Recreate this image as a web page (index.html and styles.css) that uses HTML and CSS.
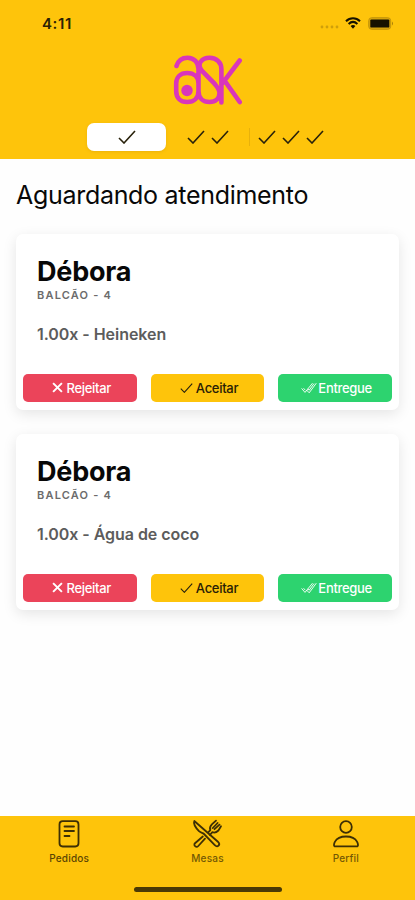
FILE: index.html
```html
<!DOCTYPE html>
<html lang="pt-BR">
<head>
<meta charset="utf-8">
<title>Pedidos</title>
<link rel="stylesheet" href="styles.css">
</head>
<body>
<svg class="defs" width="0" height="0" aria-hidden="true">
  <symbol id="tick" viewBox="0 0 18 14"><path d="M1 8l5 5L17 1"/></symbol>
</svg>
<header class="header">
  <div class="status">
    <span class="time">4:11</span>
    <div class="indicators">
      <svg class="signal" viewBox="0 0 19 4"><circle cx="2" cy="2" r="1.4"/><circle cx="7" cy="2" r="1.4"/><circle cx="12" cy="2" r="1.4"/><circle cx="17" cy="2" r="1.4"/></svg>
      <svg class="wifi" viewBox="0 0 16 12"><path d="M1 4.3C5 .3 11 .3 15 4.3M3.6 7c2.7-2.6 6.1-2.6 8.8 0" fill="none" stroke="#171200" stroke-width="2"/><path d="M5.6 9c1.4-1.3 3.4-1.3 4.8 0L8 11.8z"/></svg>
      <svg class="battery" viewBox="0 0 26 13"><rect x=".7" y=".7" width="22" height="11.6" rx="3" fill="#d9a60c" stroke="#c2940a"/><rect x="2.3" y="2.4" width="19" height="8.2" rx="1.2"/><path d="M24 4.5q2 2 0 4z" fill="#a98009"/></svg>
    </div>
  </div>
  <svg class="logo" viewBox="0 0 70 50" role="img" aria-label="ask">
    <path d="M3.5 11C5 6 9 2.7 14.5 2.7C21 2.7 25.5 7.5 25.5 14V36C25.5 43 21 47 14.2 47S3.2 43 3.2 36V28.5C3.2 22 7.5 18 14.2 18S25.5 22 25.5 28.5V36C25.5 43 30 47 36.5 47S46.5 43 46.5 38C46.5 34 44 32 41 28L29 16C23 9 29 2.7 36.5 2.7S48.4 8 48.4 14V47.5M66.7 5.5L51.5 25.5L66.7 47M48.4 29.5L51.5 25.5"/>
    <circle cx="14" cy="35.5" r="5.7"/>
  </svg>
  <nav class="segments">
    <div class="segment selected"><svg class="tick"><use href="#tick"/></svg></div>
    <div class="segment"><svg class="tick"><use href="#tick"/></svg><svg class="tick"><use href="#tick"/></svg></div>
    <div class="segment divided"><svg class="tick"><use href="#tick"/></svg><svg class="tick"><use href="#tick"/></svg><svg class="tick"><use href="#tick"/></svg></div>
  </nav>
</header>
<main class="content">
  <h1>Aguardando atendimento</h1>
  <article class="card">
    <h2>Débora</h2>
    <p class="place">BALCÃO - 4</p>
    <p class="item">1.00x - Heineken</p>
    <div class="actions">
      <button class="reject"><svg class="cross" viewBox="0 0 10 10"><path d="M1 1l8 8M9 1L1 9"/></svg><span>Rejeitar</span></button>
      <button class="accept"><svg class="small-tick" viewBox="0 0 18 14"><path d="M1 8l5 5L17 1"/></svg><span>Aceitar</span></button>
      <button class="deliver"><svg class="double" viewBox="0 0 16 12"><path d="M.6 6.4l3.4 4 7.5-9.2M5.5 8l2.7 2.8L15.3 1.2M2.5 6.2l1.8 2M7 6.8l1.2 1.4L13 1.6"/></svg><span>Entregue</span></button>
    </div>
  </article>
  <article class="card">
    <h2>Débora</h2>
    <p class="place">BALCÃO - 4</p>
    <p class="item">1.00x - Água de coco</p>
    <div class="actions">
      <button class="reject"><svg class="cross" viewBox="0 0 10 10"><path d="M1 1l8 8M9 1L1 9"/></svg><span>Rejeitar</span></button>
      <button class="accept"><svg class="small-tick" viewBox="0 0 18 14"><path d="M1 8l5 5L17 1"/></svg><span>Aceitar</span></button>
      <button class="deliver"><svg class="double" viewBox="0 0 16 12"><path d="M.6 6.4l3.4 4 7.5-9.2M5.5 8l2.7 2.8L15.3 1.2M2.5 6.2l1.8 2M7 6.8l1.2 1.4L13 1.6"/></svg><span>Entregue</span></button>
    </div>
  </article>
</main>
<footer class="footer">
  <nav class="tabs">
    <a class="tab active"><svg viewBox="0 0 28 28"><rect x="4.5" y="1.2" width="19" height="25.3" rx="3.2"/><path d="M9.5 6.5h9.5M9.5 11h9.5M9.5 16h5"/></svg><span>Pedidos</span></a>
    <a class="tab"><svg viewBox="0 0 28 28"><path d="M1.3 1C0 4 3 8 6 11.2c2 2 3.6 1.4 5 2.8l10.8 11.2c2.8 2.8 6-.5 3.4-3.2zM9.8 16.5L2 23.2c-2 2 1.2 5 3.3 2.8L12 18.7M14.8 12.8l2.5-2.6c-1.2-3 .2-4.5 1.8-6L23 .6M16.8 15l2.6-2.8c3 1.2 4.5-.2 6-1.7L28 6.2M19.8 8l4.8-5M21.5 9.2l5-4.5"/></svg><span>Mesas</span></a>
    <a class="tab"><svg viewBox="0 0 28 28"><circle cx="14" cy="7" r="5.8"/><path d="M3.4 26.4C1.2 26.4 2 23.5 3 21.6c3.6-6.8 18.4-6.8 22 0 1 1.9 1.8 4.8-.4 4.8z"/></svg><span>Perfil</span></a>
  </nav>
  <div class="home"></div>
</footer>
</body>
</html>
```
FILE: styles.css
```css
* { box-sizing: border-box; }
body {
  margin: 0;
  height: 900px;
  display: flex;
  flex-direction: column;
  overflow: hidden;
  background: #fefefe;
  color: #080808;
  font-family: Inter, "Liberation Sans", sans-serif;
}
h1, h2, p { margin: 0; white-space: nowrap; }
.defs { position: absolute; }
.header {
  height: 159px;
  flex: none;
  background: #fec40b;
  display: flex;
  flex-direction: column;
}
.status {
  height: 55px;
  padding: 14px 21px 0 42px;
  display: flex;
  justify-content: space-between;
  align-items: flex-start;
}
.time { font-size: 15px; line-height: 19px; font-weight: 600; letter-spacing: .6px; color: #2b2204; }
.indicators { display: flex; align-items: center; height: 18px; fill: #171200; }
.signal { width: 19px; height: 4px; margin: 8px 6px 0 0; fill: #cf9f0b; }
.wifi { width: 16px; height: 12px; margin-right: 7px; }
.battery { width: 26px; height: 13px; }
.logo {
  width: 70px;
  height: 50px;
  margin-left: 173px;
  fill: none;
  stroke: #d936bb;
  stroke-width: 4.6;
  stroke-linecap: round;
}
.logo circle { fill: #d936bb; stroke: none; }
.segments { display: flex; margin: 18px 0 0 87px; width: 245px; height: 28px; }
.segment {
  flex: 1;
  display: flex;
  gap: 6px;
  justify-content: center;
  align-items: center;
  border-radius: 7px;
}
.segment.selected { flex: 0 0 79px; background: #fff; box-shadow: 0 1px 3px #b9850040; }
.segment.divided {
  background: linear-gradient(#e8b10b, #e8b10b) 0 5px / 1px 18px no-repeat;
  border-radius: 0;
}
.tick, .small-tick { width: 18px; height: 14px; fill: none; stroke: #29220b; stroke-width: 1.6; }
.content { flex: 1; padding: 21px 16px 0; }
h1 { font-size: 25px; line-height: 30px; font-weight: 400; letter-spacing: -.3px; }
.card {
  height: 176px;
  margin-top: 24px;
  padding: 21px 7px 0;
  border-radius: 7px;
  background: #fff;
  box-shadow: 0 4px 14px #0000001a;
}
.card h2 { padding-left: 14px; font-size: 27px; line-height: 33px; font-weight: 700; letter-spacing: -.2px; }
.place { padding-left: 14px; font-size: 11px; line-height: 14px; font-weight: 600; letter-spacing: 1.2px; color: #6c6c6c; }
.item { padding-left: 14px; margin-top: 22px; font-size: 16px; line-height: 20px; font-weight: 600; letter-spacing: -.05px; color: #5c5c5c; }
.actions { display: grid; grid-template-columns: repeat(3, 1fr); gap: 14px; margin-top: 30px; }
button {
  height: 27.5px;
  padding: 0 0 0 3px;
  border: 0;
  border-radius: 5px;
  display: flex;
  align-items: center;
  justify-content: center;
  gap: 4px;
  font: 500 13px/18px Inter, "Liberation Sans", sans-serif;
  letter-spacing: -.3px;
  color: #fff;
}
.reject { background: #eb445a; }
.accept { background: #fec40b; color: #292006; gap: 3px; }
.deliver { background: #2dd36f; gap: 1px; }
.cross { width: 11px; height: 11px; fill: none; stroke: #fff; stroke-width: 1.8; }
.small-tick { width: 13px; height: 10px; }
.double { width: 16px; height: 12px; fill: none; stroke: #fff; stroke-width: .9; }
.footer { height: 84px; flex: none; background: #fec40b; display: flex; flex-direction: column; align-items: center; }
.tabs { width: 100%; height: 71px; display: grid; grid-template-columns: repeat(3, 1fr); }
.tab { display: flex; flex-direction: column; align-items: center; padding-top: 4px; color: #735804; font-size: 10px; line-height: 12px; font-weight: 500; letter-spacing: .2px; }
.tab svg { width: 28px; height: 28px; margin-bottom: 4px; fill: none; stroke: #3d2f05; stroke-width: 1.8; stroke-linecap: round; stroke-linejoin: round; overflow: visible; }
.active { color: #5b4503; }
.home { width: 148px; height: 5px; border-radius: 3px; background: #4a3905; }
```
